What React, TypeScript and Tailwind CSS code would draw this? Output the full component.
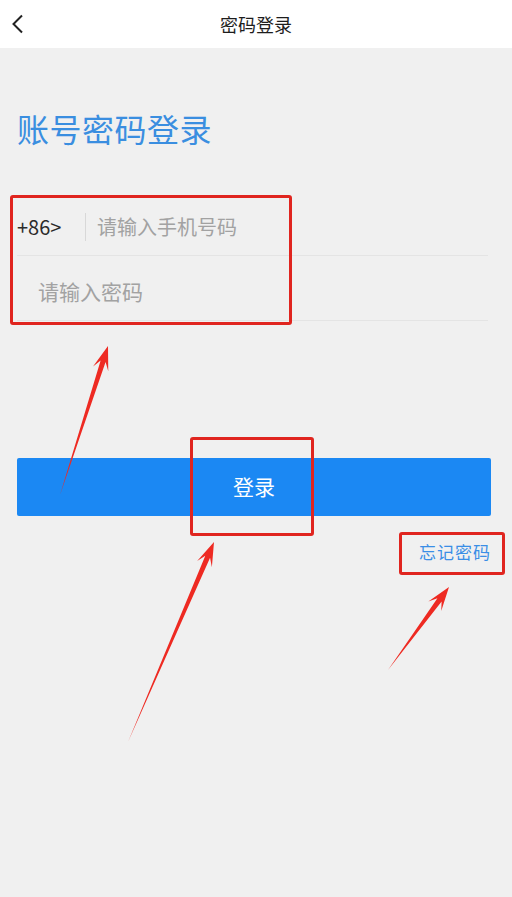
import React from 'react';

type Pt = [number, number];

// tapered red annotation arrow, tail -> tip
function arrowPoints(tail: Pt, tip: Pt) {
  const dx = tip[0] - tail[0];
  const dy = tip[1] - tail[1];
  const len = Math.hypot(dx, dy);
  const ux = dx / len;
  const uy = dy / len;
  const nx = -uy;
  const ny = ux;
  const headLen = 20;
  const headW = 8;
  const shaftW = 2.6;
  const bx = tip[0] - ux * headLen;
  const by = tip[1] - uy * headLen;
  const nb = (w: number, k = 0): Pt => [bx + nx * w - ux * k, by + ny * w - uy * k];
  const pts: Pt[] = [
    [tail[0], tail[1]],
    nb(shaftW, -4),
    nb(headW, 4),
    [tip[0], tip[1]],
    nb(-headW, 4),
    nb(-shaftW, -4),
  ];
  return pts.map((p) => p.join(',')).join(' ');
}

const arrows: [Pt, Pt][] = [
  [[60, 495], [108, 346]],
  [[128, 742], [214, 542]],
  [[388, 670], [449, 587]],
];

const App: React.FC = () => {
  return (
    <div className="relative min-h-screen h-[897px] bg-[#f0f0f0] font-['Noto_Sans_CJK_SC','Noto_Sans',sans-serif] overflow-hidden">
      {/* Header */}
      <div className="relative h-12 bg-white flex items-center justify-center">
        <svg className="absolute left-[11px] top-[14px]" width="14" height="20" viewBox="0 0 14 20">
          <polyline points="11,1.5 2.5,10 11,18.5" fill="none" stroke="#222" strokeWidth="2" />
        </svg>
        <h1 className="text-[18px] text-[#1d1d1d] leading-none">密码登录</h1>
      </div>

      {/* Main Content */}
      <div className="pl-[17px] pr-[24px]">
        <h2 className="mt-[63px] text-[32px] leading-[34px] text-[#3a8ee0] tracking-[0.5px]">账号密码登录</h2>

        <div className="mt-[46px]">
          <div className="h-[65px] flex items-center border-b border-[#e4e4e4] pt-[8px]">
            <span className="text-[20px] text-[#2b2b2b] w-[68px]">+86&gt;</span>
            <div className="w-px h-7 bg-[#d8d8d8]"></div>
            <span className="ml-[11px] text-[20px] text-[#a2a2a2]">请输入手机号码</span>
          </div>
          <div className="h-[65px] flex items-center border-b border-[#e4e4e4] pl-[21px] pt-[8px]">
            <span className="text-[21px] text-[#a2a2a2]">请输入密码</span>
          </div>
        </div>

        <button className="mt-[137px] w-[474px] h-[58px] rounded-[2px] bg-[#1b88f3] text-white text-[21px] flex items-center justify-center">
          登录
        </button>

        <div className="mt-[23px] flex justify-end w-[474px]">
          <span className="text-[17px] text-[#3a8ee6] tracking-[1px]">忘记密码</span>
        </div>
      </div>

      {/* Annotations */}
      <div className="absolute left-[10px] top-[195px] w-[282px] h-[130px] border-[3px] border-[#e0251f] rounded-[3px]"></div>
      <div className="absolute left-[190px] top-[437px] w-[124px] h-[99px] border-[3px] border-[#e0251f] rounded-[3px]"></div>
      <div className="absolute left-[399px] top-[532px] w-[106px] h-[43px] border-[3px] border-[#e0251f] rounded-[3px]"></div>
      <svg className="absolute inset-0 pointer-events-none" width="512" height="897">
        {arrows.map(([tail, tip], i) => (
          <polygon key={i} points={arrowPoints(tail, tip)} fill="#ee2a22" />
        ))}
      </svg>
    </div>
  );
};

export default App;
